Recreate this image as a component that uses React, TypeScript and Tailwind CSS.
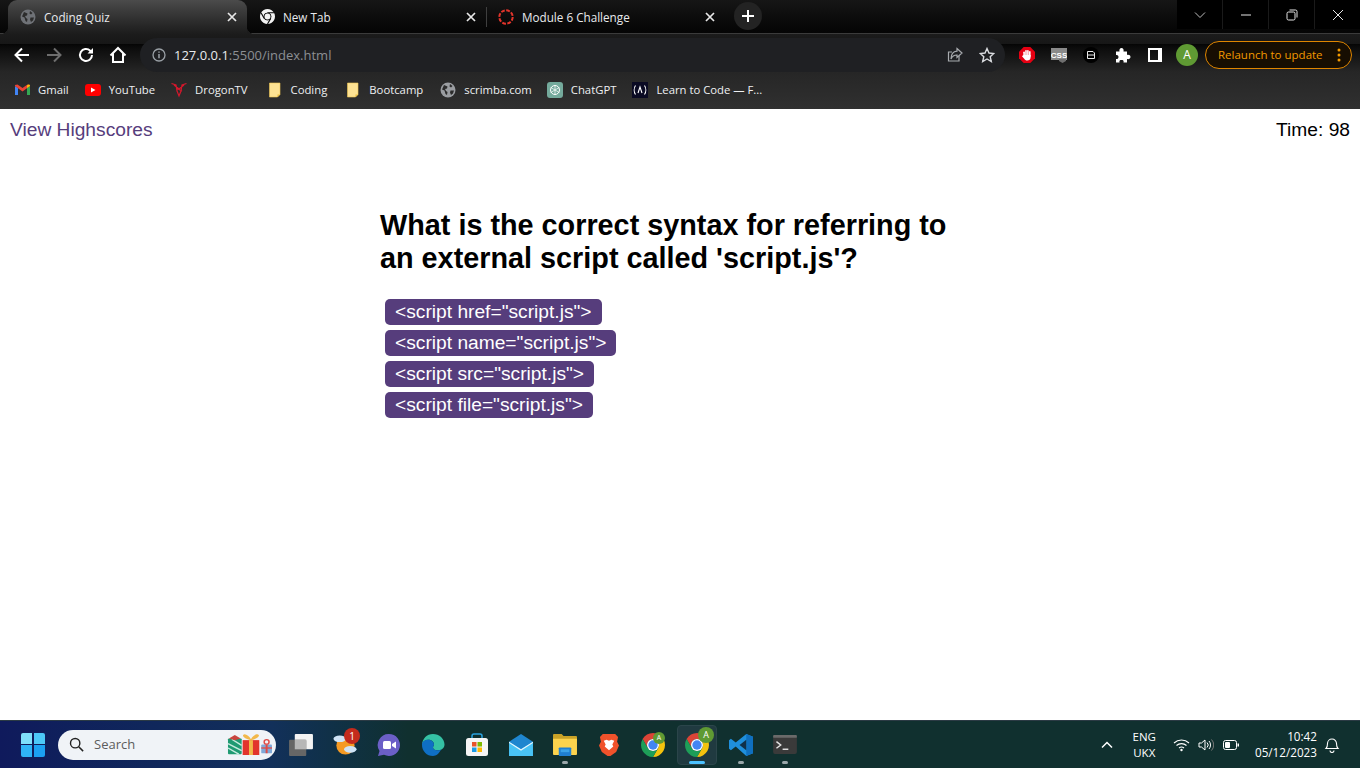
import React from "react";

const UI = "font-['Open_Sans',sans-serif]";

function Chrome({ size = 24, mono = false }: { size?: number; mono?: boolean }) {
  return (
    <svg width={size} height={size} viewBox="2 2 20 20" className="shrink-0">
      <path d="M3.340 7A10 10 0 0 1 20.660 7H12A5 5 0 0 0 7.670 14.500Z" fill={mono ? "#f2f2f2" : "#db4437"} />
      <path d="M20.660 7A10 10 0 0 1 12 22L16.330 14.500A5 5 0 0 0 12 7Z" fill={mono ? "#f2f2f2" : "#f4c20d"} />
      <path d="M12 22A10 10 0 0 1 3.340 7L7.670 14.500A5 5 0 0 0 16.330 14.500Z" fill={mono ? "#f2f2f2" : "#1e9e58"} />
      {mono && <path d="M12 7H20.660M16.330 14.500 12 22M7.670 14.500 3.340 7" stroke="#111" strokeWidth="1.500" />}
      <circle cx="12" cy="12" r="5" fill={mono ? "#111" : "#fff"} />
      <circle cx="12" cy="12" r="3.900" fill={mono ? "#f2f2f2" : "#4285f4"} />
    </svg>
  );
}

function Globe({ size = 16, fill = "#8f9296", dark = "#2a2a2a" }: { size?: number; fill?: string; dark?: string }) {
  return (
    <svg width={size} height={size} viewBox="0 0 16 16" className="shrink-0">
      <circle cx="8" cy="8" r="7.500" fill={fill} />
      <path d="M4 3 7.500 4.500 7 6.500 5 7 6 9 7.500 10 7 13 5.500 12 4.500 8.500 2 7.500Z M10 2 12.500 4 11 5.500 9.500 4.500Z M10.500 8.500h3.500l-1 3-2 1.500-1-2.500Z" fill={dark} />
    </svg>
  );
}

function Folder() {
  return (
    <svg width="16" height="16" viewBox="0 0 16 16" className="shrink-0">
      <path d="M2.500 1H13v11.500L10.500 15H2.500Z" fill="#fde293" stroke="#f0c850" strokeWidth=".6" />
      <path d="M10.500 15v-2.500H13Z" fill="#e8b93a" />
    </svg>
  );
}

function Bookmark({ icon, label, className = "" }: { icon: React.ReactNode; label: string; className?: string }) {
  return (
    <div className={`flex items-center gap-2 ${className}`}>
      <span className="flex h-4 w-4 items-center justify-center">{icon}</span>
      <span className="text-[11.300px] leading-4 text-[#eef0f2]">{label}</span>
    </div>
  );
}

function CloseX({ color = "#e8e8e8" }: { color?: string }) {
  return (
    <svg width="10" height="10" viewBox="0 0 10 10" className="shrink-0">
      <path d="M1 1 9 9M9 1 1 9" stroke={color} strokeWidth="1.700" />
    </svg>
  );
}

function Tab({ icon, label, active, sep }: { icon: React.ReactNode; label: string; active?: boolean; sep?: boolean }) {
  return (
    <div className={`relative flex h-[34px] w-[239px] items-center pb-[1px] pl-[12px] pr-[10px] ${active ? "rounded-t-[9px] bg-gradient-to-b from-[#4b4b4b] to-[#1c1c1c]" : "h-[33px]"}`}>
      {sep && <span className="absolute left-0 top-[7px] h-[20px] w-px bg-[#3f3f3f]" />}
      <span className="flex h-4 w-4 items-center justify-center">{icon}</span>
      <span className="ml-[8px] flex-1 text-[11.700px] leading-4 text-[#e8eaed]">{label}</span>
      <CloseX />
      {active && <span className="absolute -right-[8px] bottom-0 h-2 w-2 bg-[radial-gradient(circle_at_100%_0%,transparent_8px,#1c1c1c_8.500px)]" />}
      {active && <span className="absolute -left-[8px] bottom-0 h-2 w-2 bg-[radial-gradient(circle_at_0%_0%,transparent_8px,#1c1c1c_8.500px)]" />}
    </div>
  );
}

function WinBtn({ children }: { children: React.ReactNode }) {
  return <div className="flex h-[29px] w-[45px] items-center justify-center bg-black">{children}</div>;
}

function NavIcon({ children }: { children: React.ReactNode }) {
  return <div className="flex h-[34px] w-[32px] items-center justify-center">{children}</div>;
}

function TaskSlot({ children, active, dot }: { children: React.ReactNode; active?: boolean; dot?: boolean }) {
  return (
    <div className="relative flex h-[46px] w-[44px] items-center justify-center">
      <div className={`flex h-[40px] w-[40px] items-center justify-center rounded ${active ? "border border-[#2b454a] bg-[#203a40]" : ""}`}>{children}</div>
      {dot && <span className="absolute bottom-[4px] h-[3px] w-[6px] rounded-full bg-[#9aa7aa]" />}
      {active && <span className="absolute bottom-[4px] h-[3px] w-4 rounded-full bg-[#4cc2ff]" />}
    </div>
  );
}

function ChromeAvatar({ size }: { size: "s" | "l" }) {
  return (
    <div className="relative h-6 w-6">
      <Chrome size={24} />
      {size === "s" ? (
        <span className="absolute -top-[1px] right-0 flex h-3 w-3 items-center justify-center rounded-full bg-[#5f9a33] text-[7px] leading-none text-white">A</span>
      ) : (
        <span className="absolute -right-[5px] -top-[6px] flex h-4 w-4 items-center justify-center rounded-full bg-[#5f9a33] text-[9px] leading-none text-white">A</span>
      )}
    </div>
  );
}

function Gifts() {
  return (
    <svg width="45" height="21" viewBox="0 0 46 24" preserveAspectRatio="none" className="shrink-0">
      <rect x="1" y="5" width="14" height="18" rx="1" fill="#1f9a72" />
      <path d="M1 11 15 19M1 16 12 23M5 6 15 13" stroke="#c8ece0" strokeWidth="1.500" />
      <path d="M2 5 8 1l6 4-6 2Z" fill="#c8453f" />
      <rect x="16" y="7" width="17" height="17" fill="#e2342c" />
      <rect x="22.500" y="7" width="4" height="17" fill="#f1b84a" />
      <path d="M24.500 7C19.500 6 15.500 3 16.500 1c2-2 6 1 8 5 2-4 6-7 8-5 1 2-3 5-8 6Z" fill="#f2b84a" />
      <rect x="35" y="12" width="11" height="10" rx="1" fill="#7fa9d8" />
      <rect x="39.500" y="12" width="2" height="10" fill="#e04b45" />
      <path d="M35 16h11" stroke="#e04b45" strokeWidth="1.500" />
      <circle cx="40.500" cy="9" r="2.500" fill="none" stroke="#e04b45" strokeWidth="1.500" />
    </svg>
  );
}

export default function App() {
  const options = ['<script href="script.js">', '<script name="script.js">', '<script src="script.js">', '<script file="script.js">'];
  return (
    <div className="flex h-[768px] w-[1360px] flex-col overflow-hidden bg-white">
      {/* Browser chrome */}
      <div className={`${UI} flex h-[109px] shrink-0 flex-col`}>
        <div className="flex h-[34px] shrink-0 items-start justify-between border-b border-[#3b3b3b] bg-gradient-to-b from-[#161616] to-[#050505]">
          <div className="flex items-start pl-2">
            <Tab active icon={<Globe fill="#6f7277" dark="#2c2c2c" />} label="Coding Quiz" />
            <Tab icon={<Chrome size={15} mono />} label="New Tab" />
            <Tab
              sep
              icon={
                <svg width="16" height="16" viewBox="0 0 16 16">
                  <circle cx="8" cy="8" r="6.700" fill="none" stroke="#e3342b" strokeWidth="2" strokeDasharray="3.800 1.460" />
                </svg>
              }
              label="Module 6 Challenge"
            />
            <div className="ml-[9px] mt-[2px] flex h-7 w-7 items-center justify-center rounded-full bg-[#232323]">
              <svg width="14" height="14" viewBox="0 0 14 14">
                <path d="M7 1v12M1 7h12" stroke="#fff" strokeWidth="2" />
              </svg>
            </div>
          </div>
          <div className="flex gap-px bg-[#1a1a1a]">
            <WinBtn>
              <svg width="12" height="8" viewBox="0 0 12 8"><path d="M1 1.500 6 6.500 11 1.500" fill="none" stroke="#bdbdbd" /></svg>
            </WinBtn>
            <WinBtn>
              <svg width="12" height="2" viewBox="0 0 12 2"><path d="M1 1h10" stroke="#e6e6e6" /></svg>
            </WinBtn>
            <WinBtn>
              <svg width="12" height="12" viewBox="0 0 12 12"><rect x="1" y="3" width="8" height="8" rx="1.500" fill="none" stroke="#e6e6e6" /><path d="M3.500 1h6a1.500 1.500 0 0 1 1.500 1.500v6" fill="none" stroke="#e6e6e6" /></svg>
            </WinBtn>
            <WinBtn>
              <svg width="12" height="12" viewBox="0 0 12 12"><path d="M1 1 11 11M11 1 1 11" stroke="#e6e6e6" /></svg>
            </WinBtn>
          </div>
        </div>

        <div className="flex min-h-0 flex-1 flex-col bg-[linear-gradient(to_bottom,#1c1c1c_0px,#171717_10px,#050505_10px,#0c0c0c_14px,#262626_38px,#303030_75px)]">
          <div className="flex h-[38px] shrink-0 items-end pl-[6px]">
            <NavIcon>
              <svg width="18" height="18" viewBox="0 0 18 18"><path d="M16 9H3M9 2.500 2.500 9 9 15.500" fill="none" stroke="#fff" strokeWidth="2" /></svg>
            </NavIcon>
            <NavIcon>
              <svg width="18" height="18" viewBox="0 0 18 18"><path d="M2 9h13M9 2.500 15.500 9 9 15.500" fill="none" stroke="#6e6e6e" strokeWidth="2" /></svg>
            </NavIcon>
            <NavIcon>
              <svg width="16" height="16" viewBox="0 0 16 16"><path d="M14 8a6 6 0 1 1-1.800-4.300L14 5.500" fill="none" stroke="#fff" strokeWidth="2" /><path d="M15 1v5.500H9.500Z" fill="#fff" /></svg>
            </NavIcon>
            <NavIcon>
              <svg width="18" height="18" viewBox="0 0 18 18"><path d="M1.500 9.500 9 2l7.500 7.500M4 7.800V16h10V7.800" fill="none" stroke="#fff" strokeWidth="2" /></svg>
            </NavIcon>
            <div className="ml-[6px] flex h-[34px] w-[865px] items-center rounded-full bg-[#1f2023] pl-[12px] pr-[10px]">
              <svg width="14" height="14" viewBox="0 0 14 14" className="shrink-0">
                <circle cx="7" cy="7" r="6" fill="none" stroke="#9aa0a6" strokeWidth="1.300" />
                <path d="M7 6v4.200M7 3.500v1.300" stroke="#9aa0a6" strokeWidth="1.500" />
              </svg>
              <span className="ml-[8px] flex-1 text-[13px] leading-5">
                <span className="text-[#e8eaed]">127.0.0.1</span>
                <span className="text-[#8c8f93]">:5500/index.html</span>
              </span>
              <svg width="16" height="16" viewBox="0 0 16 16" className="mr-[16px] shrink-0">
                <path d="M12 9v5H1.500V5H5" fill="none" stroke="#a8abaf" strokeWidth="1.200" />
                <path d="M10 1.500 15 6l-5 4.500V8C7 8 5 9.500 4 12 4 7.500 6.500 4.500 10 4.200Z" fill="none" stroke="#a8abaf" strokeWidth="1.200" />
              </svg>
              <svg width="16" height="16" viewBox="0 0 16 16" className="shrink-0">
                <path d="M8 1.500 10 6l4.800.500-3.600 3.200 1.100 4.800L8 12l-4.300 2.500 1.100-4.800L1.200 6.500 6 6Z" fill="none" stroke="#dadce0" strokeWidth="1.400" />
              </svg>
            </div>
            <div className="ml-[6px] flex items-center">
              <NavIcon>
                <svg width="16" height="16" viewBox="0 0 16 16">
                  <path d="M4.700 0h6.600L16 4.700v6.600L11.300 16H4.700L0 11.300V4.700Z" fill="#e60012" />
                  <rect x="4.300" y="4.500" width="1.600" height="6" rx=".8" fill="#fff" />
                  <rect x="6.200" y="3" width="1.600" height="7" rx=".8" fill="#fff" />
                  <rect x="8.100" y="3" width="1.600" height="7" rx=".8" fill="#fff" />
                  <rect x="10" y="4" width="1.600" height="6" rx=".8" fill="#fff" />
                  <path d="M4.300 8h7.300v2.500c0 2-1.500 3-3.300 3-1.500 0-2.400-.6-3.100-1.800L3 9.300c.3-.8 1-.8 1.300-.5Z" fill="#fff" />
                </svg>
              </NavIcon>
              <NavIcon>
                <svg width="16" height="15" viewBox="0 0 16 15">
                  <rect x="0" y="0" width="16" height="12" fill="#8a8a8a" />
                  <path d="M8 11h7v2l-3.500 2L8 13Z" fill="#6f6f6f" />
                  <text x="8" y="9.500" textAnchor="middle" fontSize="8" fontWeight="700" fill="#fff" fontFamily="Liberation Sans, sans-serif">CSS</text>
                </svg>
              </NavIcon>
              <NavIcon>
                <svg width="16" height="16" viewBox="0 0 16 16">
                  <circle cx="8" cy="8" r="8" fill="#000" />
                  <path d="M4.500 4.500h5.500l1.500 1.500v5.500h-7Z" fill="none" stroke="#e8e8e8" strokeWidth="1" />
                  <path d="M5 8h6" stroke="#e8e8e8" strokeWidth="1" />
                </svg>
              </NavIcon>
              <NavIcon>
                <svg width="16" height="16" viewBox="0 0 16 16">
                  <path d="M1 4.500h3.500C4 2.500 5 1 6.500 1S9 2.500 8.500 4.500H12V8c2-.5 3.500.5 3.500 2S14 12.500 12 12v3.500H8.500c.5-2-.5-2.500-2-2.500s-2.500.5-2 2.500H1V12c1.500.3 2.500-.5 2.500-2S2.500 7.700 1 8Z" fill="#fff" />
                </svg>
              </NavIcon>
              <NavIcon>
                <svg width="14" height="14" viewBox="0 0 14 14">
                  <path d="M0 0h14v14H0ZM2 2v10h8V2Z" fill="#fff" fillRule="evenodd" />
                </svg>
              </NavIcon>
              <NavIcon>
                <span className="flex h-[22px] w-[22px] items-center justify-center rounded-full bg-[#5f9a33] text-[12px] leading-none text-white">A</span>
              </NavIcon>
            </div>
            <div className="mb-[3px] ml-[2px] flex h-[28px] w-[147px] items-center rounded-full border border-[#e08600] bg-[#170e02] pl-[12px] pr-[10px]">
              <span className="flex-1 text-[11.500px] leading-4 text-[#f29900]">Relaunch to update</span>
              <svg width="4" height="14" viewBox="0 0 4 14"><circle cx="2" cy="2" r="1.500" fill="#f29900" /><circle cx="2" cy="7" r="1.500" fill="#f29900" /><circle cx="2" cy="12" r="1.500" fill="#f29900" /></svg>
            </div>
          </div>

          <div className="flex min-h-0 flex-1 items-center gap-4 pb-[2px] pl-[14px]">
            <Bookmark
              label="Gmail"
              icon={
                <svg width="15" height="12" viewBox="0 0 15 12">
                  <path d="M0 2v9h3V4Z" fill="#4285f4" />
                  <path d="M12 4v7h3V2Z" fill="#34a853" />
                  <path d="M0 2 7.500 7.500 15 2V1L12.500.5 7.500 4 2.500.5 0 1Z" fill="#ea4335" />
                  <path d="M12 1.500V4l3-2c0-1.500-1.500-2-3-.5Z" fill="#fbbc04" />
                </svg>
              }
            />
            <Bookmark
              label="YouTube"
              icon={
                <svg width="16" height="12" viewBox="0 0 16 12">
                  <rect width="16" height="12" rx="3" fill="#ff0000" />
                  <path d="M6 3.500v5L10.500 6Z" fill="#fff" />
                </svg>
              }
            />
            <Bookmark
              label="DrogonTV"
              className="mr-[3px]"
              icon={
                <svg width="16" height="16" viewBox="0 0 16 16">
                  <path d="M.5 1.500 5 3l1 6 2 5 2-5 1-6 4.500-1.500M3 3l5 4 5-4M5 6l6 3" fill="none" stroke="#d4182c" strokeWidth="1.200" />
                </svg>
              }
            />
            <Bookmark label="Coding" className="mr-[2px]" icon={<Folder />} />
            <Bookmark label="Bootcamp" className="mr-[1px]" icon={<Folder />} />
            <Bookmark label="scrimba.com" className="-mr-[1px]" icon={<Globe fill="#9a9da1" dark="#2b2b2b" />} />
            <Bookmark
              label="ChatGPT"
              icon={
                <svg width="16" height="16" viewBox="0 0 16 16">
                  <rect width="16" height="16" rx="3" fill="#74aa9c" />
                  <circle cx="8" cy="8" r="4.500" fill="none" stroke="#fff" strokeWidth="1" />
                  <path d="M8 3v10M3.700 5.500l8.600 5M3.700 10.500l8.600-5" stroke="#fff" strokeWidth=".7" />
                </svg>
              }
            />
            <Bookmark
              label="Learn to Code — F..."
              icon={
                <svg width="16" height="16" viewBox="0 0 16 16">
                  <rect width="16" height="16" fill="#0a0a23" />
                  <path d="M3.500 3.500C1.800 6 1.800 10 3.500 12.500M12.500 3.500c1.700 2.500 1.700 6.500 0 9M6 11l2-6 2 6" fill="none" stroke="#fff" strokeWidth="1.100" />
                </svg>
              }
            />
          </div>
        </div>
      </div>

      {/* Page */}
      <div className="min-h-0 flex-1 bg-white font-['Liberation_Sans',sans-serif]">
        <div className="flex justify-between px-[10px] pt-[10px] text-[19.200px] leading-[22px]">
          <span className="text-[#563d7c]">View Highscores</span>
          <span className="text-black">Time: 98</span>
        </div>
        <div className="mx-auto mt-[68px] w-[600px]">
          <h1 className="text-[28.800px] font-bold leading-[33px] text-black">
            What is the correct syntax for referring to an external script called 'script.js'?
          </h1>
          <div className="mt-[24px] flex flex-col items-start gap-[5px] pl-[5px]">
            {options.map((o) => (
              <button key={o} className="h-[26px] rounded-[5px] bg-[#563d7c] px-[10px] text-[19.200px] leading-[26px] text-white">
                {o}
              </button>
            ))}
          </div>
        </div>
      </div>

      {/* Taskbar */}
      <div className={`${UI} flex h-[48px] shrink-0 items-center border-t border-[#2b3a44] bg-gradient-to-r from-[#0f1a5c] via-[#12305a] via-[20%] to-[#10302f] to-[30%]`}>
        <div className="ml-[21px] grid h-[24px] w-[24px] grid-cols-2 gap-[1.500px]">
          <span className="rounded-tl-[2px] bg-[#7ee0fb]" />
          <span className="rounded-tr-[2px] bg-[#4cc8f8]" />
          <span className="rounded-bl-[2px] bg-[#2fb4f6]" />
          <span className="rounded-br-[2px] bg-[#1ba0f2]" />
        </div>
        <div className="ml-[13px] flex h-[30px] w-[218px] items-center rounded-full bg-[#f0f3f7] pl-[11px] pr-[4px]">
          <svg width="15" height="15" viewBox="0 0 17 17" className="shrink-0">
            <circle cx="7" cy="7" r="5.300" fill="none" stroke="#222" strokeWidth="1.600" />
            <path d="M11 11 16 16" stroke="#222" strokeWidth="1.700" />
          </svg>
          <span className="ml-[10px] flex-1 pb-[2px] text-[13px] leading-5 text-[#5c5c5c]">Search</span>
          <Gifts />
        </div>
        <div className="ml-[3px] flex items-center">
          <TaskSlot>
            <svg width="24" height="22" viewBox="0 0 25 23">
              <rect x="6" y="0" width="19" height="16" rx="1" fill="#f3f3f3" />
              <rect x="0" y="6" width="18" height="17" rx="1" fill="#666" />
              <rect x="6" y="6" width="12" height="10" fill="#b7b7b7" />
            </svg>
          </TaskSlot>
          <TaskSlot>
            <div className="relative">
              <svg width="24" height="24" viewBox="0 0 25 25" className="block">
                <circle cx="13" cy="13" r="9.500" fill="#f59a23" />
                <ellipse cx="7" cy="6" rx="6.500" ry="3.500" fill="#cfe3f5" />
                <ellipse cx="18" cy="17" rx="6.500" ry="3.500" fill="#cfe3f5" />
              </svg>
              <span className="absolute -right-[3px] -top-[5px] flex h-4 w-4 items-center justify-center rounded-full bg-[#c42b1c] text-[10px] leading-none text-white">1</span>
            </div>
          </TaskSlot>
          <TaskSlot>
            <svg width="24" height="24" viewBox="0 0 24 24">
              <path d="M12 1a11 11 0 1 1-5 20.800L1 23l1.500-5A11 11 0 0 1 12 1Z" fill="#6b5fc7" />
              <rect x="6" y="8" width="8" height="8" rx="1.500" fill="#fff" />
              <path d="M15 11l4-2.500v7L15 13Z" fill="#fff" />
            </svg>
          </TaskSlot>
          <TaskSlot>
            <svg width="24" height="24" viewBox="0 0 25 25">
              <path d="M12.500 1C19 1 24.500 6 24.500 12c0 4-3.500 6-6.500 6-3 0-5.500-1-5.500-3 0-1 1-1.500 1-3 0-3-3-5-6-5C4.500 7 2 9 1 12 1.500 6 6 1 12.500 1Z" fill="#35c1a4" />
              <path d="M1 12c0-3 3-5 6.500-5 3 0 6 2 6 5 0 1.500-1 2-1 3 0 2 2.500 3 5.500 3 1.500 0 2.500-.5 3-1-2 4.500-5 7-8.500 7C6 24 1 19 1 12Z" fill="#0f6fc4" />
            </svg>
          </TaskSlot>
          <TaskSlot>
            <svg width="24" height="24" viewBox="0 0 24 24">
              <path d="M7 6V3a2 2 0 0 1 2-2h6a2 2 0 0 1 2 2v3" fill="none" stroke="#2aa3e0" strokeWidth="1.500" />
              <rect x="1" y="5" width="22" height="18" rx="2.500" fill="#f5f5f5" />
              <rect x="7" y="9" width="4.500" height="4.500" fill="#e8532b" />
              <rect x="12.500" y="9" width="4.500" height="4.500" fill="#7fba00" />
              <rect x="7" y="14.500" width="4.500" height="4.500" fill="#1c9be6" />
              <rect x="12.500" y="14.500" width="4.500" height="4.500" fill="#ffb900" />
            </svg>
          </TaskSlot>
          <TaskSlot>
            <svg width="24" height="22" viewBox="0 0 25 23">
              <path d="M0 8 12.500 0 25 8v15H0Z" fill="#1f86cf" />
              <path d="M0 8l12.500 8L25 8v15H0Z" fill="#49c3f5" />
              <path d="M0 8l12.500 8L25 8v1.500l-12.500 8L0 9.500Z" fill="#e8f6fd" />
            </svg>
          </TaskSlot>
          <TaskSlot dot>
            <svg width="24" height="23" viewBox="0 0 25 24">
              <path d="M0 2a1 1 0 0 1 1-1h8l2 2h13a1 1 0 0 1 1 1v4H0Z" fill="#c9a227" />
              <path d="M0 6h25v16a1 1 0 0 1-1 1H1a1 1 0 0 1-1-1Z" fill="#fcd34d" />
              <rect x="6" y="15" width="13" height="9" rx="1" fill="#1f7fd1" />
              <rect x="8" y="17" width="9" height="3" fill="#3ba3e8" />
            </svg>
          </TaskSlot>
          <TaskSlot>
            <svg width="20" height="23" viewBox="0 0 21 24">
              <path d="M4 1h13l3 3-1 5 2 4-3 7-6 4h-3l-6-4-3-7 2-4-1-5Z" fill="#f0522b" />
              <path d="M5 8l3-1 2.500 1 2.500-1 3 1-2 4 1 2-4.500 4-4.500-4 1-2Z" fill="#fff" />
            </svg>
          </TaskSlot>
          <TaskSlot>
            <ChromeAvatar size="s" />
          </TaskSlot>
          <TaskSlot active>
            <ChromeAvatar size="l" />
          </TaskSlot>
          <TaskSlot dot>
            <svg width="24" height="24" viewBox="0 0 25 25">
              <path d="M18 1 25 4v17l-7 3L7 14l-5 4-2-1.500v-9L2 6l5 4Z" fill="#1f8fdc" />
              <path d="M18 1 25 4v17l-7 3Z" fill="#0f6fbf" />
              <path d="M18 7v11l-7-5.500Z" fill="#10304a" />
            </svg>
          </TaskSlot>
          <TaskSlot dot>
            <svg width="24" height="19" viewBox="0 0 25 20">
              <rect width="25" height="20" rx="2" fill="#3a3a3a" />
              <rect width="25" height="3" rx="1" fill="#6a6a6a" />
              <path d="M3.500 7 8 10.500 3.500 14" fill="none" stroke="#e5e5e5" strokeWidth="1.500" />
              <path d="M10 15h6" stroke="#e5e5e5" strokeWidth="1.500" />
            </svg>
          </TaskSlot>
        </div>
        <div className="ml-auto flex items-center text-white">
          <svg width="12" height="8" viewBox="0 0 12 8" className="mr-[20px]"><path d="M1 6.500 6 1.500 11 6.500" fill="none" stroke="#fff" strokeWidth="1.500" /></svg>
          <div className="mr-[17px] flex flex-col items-center text-[11.500px] leading-[16px]">
            <span>ENG</span>
            <span>UKX</span>
          </div>
          <svg width="17" height="14" viewBox="0 0 17 14" className="mr-[8px]">
            <path d="M1 5a11 11 0 0 1 15 0M3.500 7.500a7.500 7.500 0 0 1 10 0M6 10a4 4 0 0 1 5 0" fill="none" stroke="#fff" strokeWidth="1.100" />
            <circle cx="8.500" cy="12" r="1.200" fill="#fff" />
          </svg>
          <svg width="16" height="14" viewBox="0 0 16 14" className="mr-[9px]">
            <path d="M1 5v4h2.500L7 12V2L3.500 5Z" fill="none" stroke="#fff" strokeWidth="1" />
            <path d="M9 4.500a3.500 3.500 0 0 1 0 5M11 3a6 6 0 0 1 0 8" fill="none" stroke="#fff" strokeWidth="1" />
            <path d="M13.500 1.500a8 8 0 0 1 0 11" fill="none" stroke="#777" strokeWidth="1" />
          </svg>
          <svg width="16" height="10" viewBox="0 0 16 10" className="mr-[16px]">
            <rect x=".5" y=".5" width="13" height="9" rx="2" fill="none" stroke="#fff" />
            <rect x="2" y="2" width="5" height="6" rx="1" fill="#fff" />
            <rect x="14.500" y="3.500" width="1.500" height="3" fill="#fff" />
          </svg>
          <div className="flex flex-col items-end pb-[2px] text-[11.700px] leading-[16px]">
            <span>10:42</span>
            <span>05/12/2023</span>
          </div>
          <svg width="16" height="16" viewBox="0 0 16 16" className="ml-[7px] mr-[20px]">
            <path d="M2 11.500c1-1 1.500-2 1.500-5a4.500 4.500 0 0 1 9 0c0 3 .5 4 1.500 5Z" fill="none" stroke="#fff" strokeWidth="1.100" />
            <path d="M6 13.500a2 2 0 0 0 4 0" fill="none" stroke="#fff" strokeWidth="1.100" />
          </svg>
        </div>
      </div>
    </div>
  );
}
